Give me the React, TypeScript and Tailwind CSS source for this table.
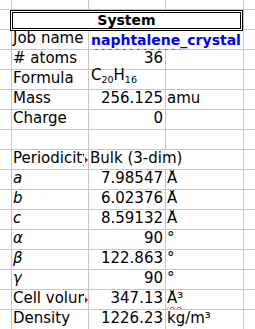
import React from "react";

const font = "font-['DejaVu_Sans',sans-serif] text-[15px] text-black";

function Empty({ span = "" }: { span?: string }) {
  return <div className={`bg-white ${span}`} />;
}

function Label({ children, italic = false, clipped = false }: { children: React.ReactNode; italic?: boolean; clipped?: boolean }) {
  return (
    <div className="bg-white relative flex items-end overflow-hidden whitespace-nowrap">
      <div className={`pl-px overflow-hidden ${clipped ? "w-[72px]" : ""} ${italic ? "italic" : ""}`}>{children}</div>
      {clipped && (
        <div className="absolute right-0 top-1/2 -translate-y-1/2 w-0 h-0 border-y-[3px] border-y-transparent border-l-[3px] border-l-[#e00000]" />
      )}
    </div>
  );
}

function Num({ children }: { children: React.ReactNode }) {
  return <div className="bg-white flex items-end justify-end pr-[2px] whitespace-nowrap">{children}</div>;
}

function Unit({ children }: { children?: React.ReactNode }) {
  return <div className="bg-white flex items-end pl-px whitespace-nowrap overflow-hidden">{children}</div>;
}

function Row({ label, value, unit, italic, clipped }: { label: string; value: string; unit?: React.ReactNode; italic?: boolean; clipped?: boolean }) {
  return (
    <>
      <Empty />
      <Label italic={italic} clipped={clipped}>{label}</Label>
      <Num>{value}</Num>
      <Unit>{unit}</Unit>
      <Empty />
    </>
  );
}

const wavy = "underline decoration-wavy decoration-[#ff0000] decoration-1 underline-offset-[3px]";

export default function App() {
  return (
    <div className={`w-[255px] h-[329px] overflow-hidden bg-white ${font}`}>
      <div className="grid grid-cols-[11px_76px_76px_77px_11px] grid-rows-[9px_repeat(16,19px)] gap-px bg-[#c6c6c6] w-[255px]">
        {/* row 0 */}
        <Empty />
        <Empty />
        <Empty />
        <Empty />
        <Empty />
        {/* header */}
        <Empty />
        <div className="col-span-3 bg-white relative z-10">
          <div className="-ml-[2px] w-[233px] h-[21px] border-[3px] border-double border-black bg-white flex justify-center">
            <span className="font-bold text-[14px] leading-[15px]">System</span>
          </div>
        </div>
        <Empty />
        {/* Job name */}
        <Empty />
        <Label>Job name</Label>
        <div className="col-span-2 bg-white flex items-end pl-[2px] whitespace-nowrap">
          <span className="font-bold text-[14px] text-[#0000ff] leading-[18px]">
            <span className={wavy}>naphtalene</span>_crystal
          </span>
        </div>
        <Empty />
        <Row label="# atoms" value="36" />
        {/* Formula */}
        <Empty />
        <Label>Formula</Label>
        <div className="bg-white flex items-end pl-[2px] whitespace-nowrap">
          <span className="leading-[18px]">
            C<span className="text-[9.5px] align-[-3px]">20</span>H<span className="text-[9.5px] align-[-3px]">16</span>
          </span>
        </div>
        <Unit />
        <Empty />
        <Row label="Mass" value="256.125" unit="amu" />
        <Row label="Charge" value="0" />
        {/* empty */}
        <Empty />
        <Empty />
        <Empty />
        <Empty />
        <Empty />
        {/* Periodicity */}
        <Empty />
        <Label clipped>Periodicity</Label>
        <div className="col-span-2 bg-white flex items-end pl-px whitespace-nowrap">Bulk (3-dim)</div>
        <Empty />
        <Row label="a" italic value="7.98547" unit="Å" />
        <Row label="b" italic value="6.02376" unit="Å" />
        <Row label="c" italic value="8.59132" unit="Å" />
        <Row label="α" italic value="90" unit="°" />
        <Row label="β" italic value="122.863" unit="°" />
        <Row label="γ" italic value="90" unit="°" />
        <Row label="Cell volume" clipped value="347.13" unit={<span className={wavy}>Å³</span>} />
        <Row label="Density" value="1226.23" unit="kg/m³" />
      </div>
    </div>
  );
}
